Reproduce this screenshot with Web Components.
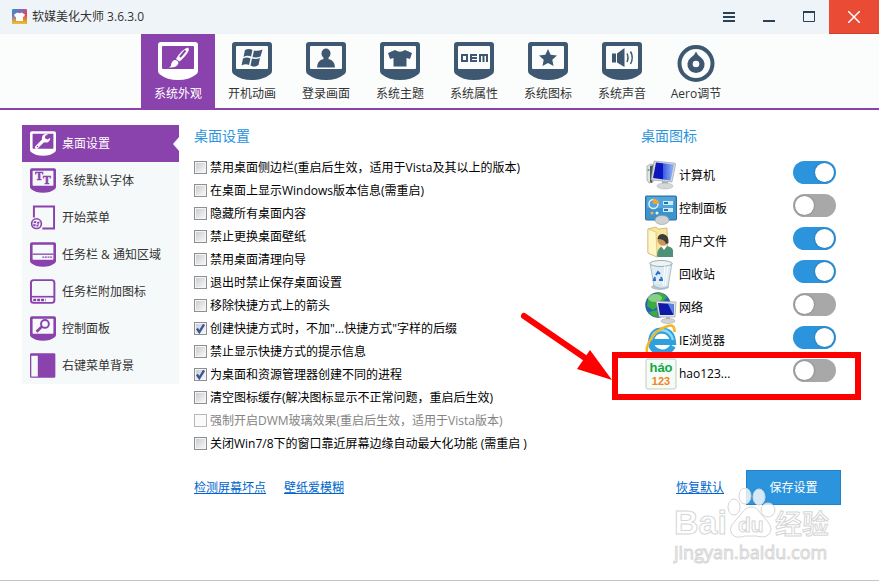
<!DOCTYPE html>
<html lang="zh-CN">
<head>
<meta charset="utf-8">
<meta name="viewport" content="width=device-width, initial-scale=1">
<title>软媒美化大师</title>
<style>
  html, body { height: 100%; }
  body {
    margin: 0;
    background: #fff;
    color: #333;
    font: 12px/18px "Open Sans", "Noto Sans CJK SC", sans-serif;
  }
</style>
</head>
<body>
<app-window></app-window>

<script>
const SHELL = 'M3 0H37Q40 0 40 3V29Q40 31 38 32.500Q31 38 20 38T2 32.500Q0 31 0 29V3Q0 0 3 0Z';

// monitor-shaped frame shared by the toolbar and sidebar icons
const monitor = (inner) => `
  <svg viewBox="0 0 40 38" fill="currentColor">
    <path d="${SHELL}"/>
    <rect x="4" y="4" width="32" height="23" rx="1" fill="var(--screen, #fbfdfd)"/>
    ${inner}
  </svg>`;

const ICONS = {
  brush: monitor(`<path d="M30 5.500Q25 7 20.500 13L18 17L21.500 19.500Q28 14 30.500 9Q31.500 6.500 30 5.500Z"/>
    <path d="M27.500 8.500L22 15" stroke="var(--screen)" stroke-width="2"/>
    <path d="M16.500 18Q20 18 20.500 21Q19 26 11 25.500Q13.500 24 13.500 21Q14.500 18.500 16.500 18Z"/>`),
  windows: monitor(`<path d="M13 8Q17 6 20.500 8L19 14.500Q15 13 11.500 15ZM22 8.500Q26 9.500 30.500 7.500L28.500 14.500Q24 16 20.500 15ZM11 16.500Q15 14.500 18.500 16.500L17 23Q13.500 21.500 9.500 23.500ZM20 16.500Q24 17.500 28 16L26.500 23Q22 26 18.500 23.500Z"/>`),
  user: monitor(`<ellipse cx="20" cy="11.500" rx="4.500" ry="5"/><path d="M17.500 15H22.500V17Q29 18.500 29 25.500H11Q11 18.500 17.500 17Z"/>`),
  shirt: monitor(`<path d="M15 8Q20 11.500 25 8L32 11L30 17L26.500 16V24.500H13.500V16L10 17L8 11Z"/>`),
  oem: monitor(`<g fill="none" stroke="currentColor" stroke-width="2"><path d="M8 13H13V19H8ZM23 13H17V19H23M17 16H23M26 20V13H33V20M29.500 13V20"/></g>`),
  star: monitor(`<path d="M20 7L22.600 12.800L29 13.400L24.300 17.800L25.500 24L20 21L14.500 24L15.700 17.800L11 13.400L17.400 12.800Z"/>`),
  sound: monitor(`<path d="M10 11.500H14V20.500H10ZM15 11.500L22.500 6V25L15 20.500Z"/>
    <path d="M25 11.500Q27 15.500 25 20M28.500 9.500Q32 15.500 28.500 22" fill="none" stroke="currentColor" stroke-width="1.500"/>`),
  aero: `<svg viewBox="0 0 40 38">
    <circle cx="20" cy="21.500" r="16.500" fill="none" stroke="currentColor" stroke-width="4"/>
    <path fill="currentColor" d="M20 9.500Q21.500 13.500 25 15.500A8.600 8.600 0 1 1 15 15.500Q18.500 13.500 20 9.500Z"/>
    <circle cx="20" cy="22" r="3.300" fill="#fbfdfd"/></svg>`,
  wrench: monitor(`<path d="M10 25L21 14" stroke="currentColor" stroke-width="5" stroke-linecap="round"/>
    <path d="M28 5Q20 3 18.500 9.500Q17.500 16 22.500 17.500Q30 18.500 31.500 10L27 13L23 11L23.500 7Z"/>
    <circle cx="11.500" cy="23.500" r="1.200" fill="var(--screen)"/>`),
  font: monitor(`<text font-family="Liberation Serif, serif" font-weight="bold" font-size="18" stroke="currentColor" stroke-width=".800"><tspan x="8" y="18">T</tspan><tspan x="20" y="24">T</tspan></text>`),
  start: `<svg viewBox="0 0 40 38"><path d="M6 19V2H37V36H19" fill="none" stroke="currentColor" stroke-width="3"/>
    <circle cx="10" cy="28.500" r="7.500" fill="none" stroke="currentColor" stroke-width="2.500"/>
    <path fill="currentColor" d="M6 25Q8 24 10 25L9 28Q7 27 5 28ZM11.500 25.500L15 25L14 28.500L10.500 28.500ZM5 29.500L9 29.500L8 33L5 32ZM10 30L14 29.500L12.500 33L9.500 33Z"/></svg>`,
  taskbar: monitor(`<path d="M4 18.500H36" stroke="currentColor" stroke-width="2"/><path d="M19 23H35" stroke="currentColor" stroke-width="2" stroke-dasharray="3 1"/>`),
  taskbarExtra: `<svg viewBox="0 0 40 38" fill="none" stroke="currentColor"><rect x="1.500" y="1.500" width="36" height="35" rx="4" stroke-width="3"/>
    <path d="M2 27H37" stroke-width="2.500"/><path d="M5 32H24" stroke-width="4" stroke-dasharray="4.500 1.500"/></svg>`,
  search: monitor(`<circle cx="23" cy="12" r="6" fill="none" stroke="currentColor" stroke-width="3"/><path d="M18.500 16L10 24" stroke="currentColor" stroke-width="4"/>`),
  menuBg: `<svg viewBox="0 0 40 38"><rect x="0" y="0" width="39" height="38" rx="2" fill="currentColor"/><rect x="2" y="4" width="10" height="32" fill="#f6f9f9"/></svg>`,

  appLogo: `<svg viewBox="0 0 16 16">
    <defs>
      <linearGradient id="a" x1="0" y1="0" x2="1" y2="1"><stop offset="0" stop-color="#2796d4"/><stop offset=".45" stop-color="#9861ad"/><stop offset=".6" stop-color="#e04458"/><stop offset="1" stop-color="#e64025"/></linearGradient>
      <linearGradient id="b" x1="0" y1="0" x2="0" y2="1"><stop offset=".4" stop-color="#e9d430" stop-opacity="0"/><stop offset="1" stop-color="#e9c62c"/></linearGradient>
    </defs>
    <rect width="15" height="15" rx="1" fill="url(#a)"/><rect width="15" height="15" rx="1" fill="url(#b)"/>
    <path fill="#fff" d="M5.500 3.500Q7.500 5 9.500 3.500L13 5.500L12 8L11 7.500V12H4V7.500L3 8L2 5.500Z"/></svg>`,

  computer: `<svg viewBox="0 0 32 32">
    <defs><linearGradient id="s" x1="0" y1="0" x2="1" y2="0"><stop offset="0" stop-color="#1018b0"/><stop offset=".45" stop-color="#0a14c8"/><stop offset=".5" stop-color="#3d5fe0"/><stop offset="1" stop-color="#9cb8f4"/></linearGradient></defs>
    <path fill="#dfe3e5" stroke="#92999d" stroke-width=".700" d="M2 6L6 4L10 5L8 22L4 23L2 20Z"/><path fill="#4f5659" d="M5 6L9 5L7 23L5 22Z"/>
    <circle cx="3.500" cy="10" r="1" fill="#37b93c"/>
    <path fill="#d5d9db" stroke="#92999d" stroke-width=".600" d="M9 1L29 3Q31 3 30.500 5L27 22L6 20Z"/>
    <path fill="url(#s)" d="M11 2.500L29 4.500L25.500 20.500L8 18Z"/>
    <path fill="#a9b0b4" d="M17 21L23 22L22 27H17Z"/><ellipse cx="20" cy="26" rx="8" ry="3" fill="#d4d8da" stroke="#a3aaad" stroke-width=".500"/></svg>`,
  panel: `<svg viewBox="0 0 32 32"><rect x=".500" y="3" width="31" height="24" rx="1" fill="#3e93cd" stroke="#286e9f"/>
    <path d="M2 4H30L28 15H2Z" fill="#62b1e0" opacity=".600"/><circle cx="8.500" cy="11" r="4.500" fill="none" stroke="#d9f0fb" stroke-width="1.500"/>
    <path d="M8 11V5.500Q13 6 14 11Z" fill="#f7a32c"/><circle cx="7" cy="20" r="1.500" fill="#ffac36"/><circle cx="12" cy="20" r="1.500" fill="#e7f5fb"/>
    <g fill="#c9edff"><rect x="18" y="8" width="10" height="4"/><rect x="18" y="15" width="10" height="4"/></g>
    <path d="M19 9H23V11H19ZM19 16H23V18H19Z" fill="#2874a8"/><ellipse cx="17" cy="27" rx="7" ry="4.500" fill="#cfd2d3" stroke="#96999b" stroke-width=".600"/></svg>`,
  files: `<svg viewBox="0 0 32 32"><path fill="#f7e69f" stroke="#c4a850" stroke-width=".700" d="M3 3L11 1L13 3L22 2L23 28L12 31L3 27Z"/>
    <path fill="#fff6c6" stroke="#d0b767" stroke-width=".600" d="M3 3L11 6L12 31L3 27Z"/>
    <path fill="#4f9078" d="M12 30Q12 21 19 20Q27 20 28 24L28 31H13Z"/><circle cx="18" cy="14" r="5.500" fill="#cb9460"/>
    <path fill="#3c3d39" d="M12.500 13Q13 8 18 8Q24 9 23.500 17L21 18Q20 13 12.500 13Z"/><path fill="#fff" d="M16 20L19 24L22 20Z"/></svg>`,
  bin: `<svg viewBox="0 0 32 32"><ellipse cx="15" cy="28" rx="9" ry="3" fill="#bac5cb"/>
    <path fill="#dae9f1" fill-opacity=".850" stroke="#92a7b2" stroke-width=".700" d="M5 4L27 4L23 28Q15 31 9 27Z"/>
    <ellipse cx="16" cy="4.500" rx="11" ry="3" fill="#eef3f5" stroke="#889aa4" stroke-width=".800"/>
    <path fill="none" stroke="#2673c9" stroke-width="2" d="M11 16L13 13L15 15M16 18L17 21H14M11 21L9 21L10 18"/>
    <path d="M20 7L18 27M23 7L20 27" stroke="#fff" stroke-width="1"/></svg>`,
  network: `<svg viewBox="0 0 32 32"><circle cx="13" cy="13" r="12.500" fill="#1e68ba" stroke="#234770" stroke-width=".500"/>
    <path fill="#3dab3f" d="M3 7Q8 0 17 1L22 5L17 10L11 9L12 15L8 18L2 14ZM4 20L12 18L13 25Q7 25 4 20Z"/>
    <ellipse cx="10" cy="6" rx="7" ry="4" fill="#c3f1ba" opacity=".550"/>
    <path fill="#e2e5e7" stroke="#8f9799" stroke-width=".600" d="M11 9L31 10L30 25L14 25Z"/><path fill="#101aa8" d="M13 11L29 12L28.500 23L15 23Z"/>
    <path fill="#5a85e5" d="M23 12L29 12L28.500 23Z"/><path fill="#b0b5b8" d="M21 25H25V29H21Z"/><ellipse cx="23" cy="29" rx="7" ry="2.500" fill="#cfd4d6" stroke="#989fa1" stroke-width=".500"/></svg>`,
  ie: `<svg viewBox="0 0 32 32"><path fill="none" stroke="#2fa0de" stroke-width="6" d="M28 21Q24 28 16.500 27.500Q6 26 6 16.500Q7 5.500 17 5.500Q27 6 28 17H9"/>
    <path fill="none" stroke="#8fdaf6" stroke-width="2.500" d="M6 15Q8 5.500 17 5Q26 6 28 15"/>
    <path fill="none" stroke="#f3b726" stroke-width="2.500" d="M5 30Q-1 28 4 17Q11 4 23 1Q30-1 29.500 7"/></svg>`,
  hao: `<svg viewBox="0 0 32 32"><rect x="1" y="1" width="30" height="30" rx="2" fill="#f5fbf6" stroke="#bfcdc4"/>
    <g font-family="Liberation Sans, sans-serif" font-weight="bold" text-anchor="middle"><text x="16" y="14" font-size="13" fill="#10a942">háo</text><text x="16" y="27" font-size="11" fill="#f28522">123</text></g></svg>`
};

function define(name, css, html, setup) {
  customElements.define(name, class extends HTMLElement {
    connectedCallback() {
      if (this.shadowRoot) return;
      this.attachShadow({ mode: 'open' });
      this.shadowRoot.innerHTML = `<style>* { box-sizing: border-box; } ${css}</style>${html}`;
      if (setup) setup(this, this.shadowRoot);
    }
  });
}

define('app-icon', `
  :host { display: block; flex: none; }
  svg { display: block; width: 100%; height: 100%; overflow: visible; }
`, '', (el, root) => {
  root.innerHTML += ICONS[el.getAttribute('name')];
});

define('title-bar', `
  :host { display: flex; align-items: center; height: 34px; background: #eff4f9; }
  app-icon { width: 16px; height: 16px; margin: 0 4px 0 12px; }
  h1 { flex: 1; margin: 0; font: inherit; }
  button { width: 40px; height: 34px; padding: 0; border: 0; background: none; color: #2b4158; display: grid; place-items: center; }
  .close { width: 50px; background: #e94b35; color: #fff; border-bottom: 1px solid #cf422f; }
  svg { display: block; fill: none; stroke: currentColor; }
`, `
  <app-icon name="appLogo"></app-icon>
  <h1><slot></slot></h1>
  <button aria-label="菜单"><svg width="12" height="12" stroke-width="2"><path d="M0 2H12M0 6H12M0 10H12"/></svg></button>
  <button aria-label="最小化"><svg width="12" height="12" stroke-width="2"><path d="M0 10H12"/></svg></button>
  <button aria-label="最大化"><svg width="12" height="12"><path d="M.500 1H11.500V10.500H.500Z"/><path d="M0 1H12" stroke-width="2"/></svg></button>
  <button class="close" aria-label="关闭"><svg width="12" height="12" stroke-width="1.500"><path d="M0 0L12 12M12 0L0 12"/></svg></button>
`);

define('nav-tab', `
  :host { display: block; width: 74px; }
  button { width: 100%; height: 74px; padding: 8px 0 5px; border: 0; background: none; color: #333; font: inherit; display: flex; flex-direction: column; align-items: center; justify-content: space-between; }
  app-icon { width: 40px; height: 38px; color: #3f5871; }
  :host([active]) button { background: #8a42ad; color: #fff; }
  :host([active]) app-icon { color: #fff; --screen: #8a42ad; }
`, `<button><app-icon></app-icon><span><slot></slot></span></button>`, (el, root) => {
  root.querySelector('app-icon').replaceWith(makeIcon(el));
});

define('side-item', `
  :host { display: block; --screen: #f6f9f9; }
  button { width: 100%; height: 37px; padding: 0 0 0 8px; border: 0; background: none; color: #333; font: inherit; text-align: left; display: flex; align-items: center; gap: 6px; }
  app-icon { width: 26px; height: 25px; color: #8a42ad; }
  span { flex: 1; white-space: nowrap; }
  :host([active]) { --screen: #8a42ad; }
  :host([active]) button { background: #8a42ad; color: #fff; }
  :host([active]) app-icon { color: #fff; }
  :host([active]) button::after { content: ""; border: 7px solid transparent; border-left: 0; border-right: 6px solid #fff; }
`, `<button><app-icon></app-icon><span><slot></slot></span></button>`, (el, root) => {
  root.querySelector('app-icon').replaceWith(makeIcon(el));
});

function makeIcon(el) {
  const icon = document.createElement('app-icon');
  icon.setAttribute('name', el.getAttribute('icon'));
  return icon;
}

define('check-row', `
  :host { display: block; color: #000; }
  label { display: flex; align-items: center; gap: 3px; height: 23px; white-space: nowrap; }
  input { appearance: none; flex: none; width: 13px; height: 13px; margin: 0; border: 1px solid #8e8f8f; background: linear-gradient(135deg, #c9cdd3, #f7f7f7) content-box, #f4f4f4; padding: 1px; }
  input:checked { background: url("data:image/svg+xml,%3Csvg xmlns='http://www.w3.org/2000/svg' viewBox='0 0 11 11'%3E%3Cpath d='M2.500 5.500L4.500 8.500L8.500 2' fill='none' stroke='%233c5499' stroke-width='2'/%3E%3C/svg%3E") border-box, linear-gradient(135deg, #c9cdd3, #f7f7f7) content-box, #f4f4f4; }
  :host([disabled]) { color: #838383; }
  input:disabled { border-color: #b8b8b8; background: #fafafa; }
`, `<label><input type="checkbox"><span><slot></slot></span></label>`, (el, root) => {
  const input = root.querySelector('input');
  input.checked = el.hasAttribute('checked');
  input.disabled = el.hasAttribute('disabled');
});

define('toggle-row', `
  :host { display: block; position: relative; color: #000; }
  label { display: flex; align-items: center; gap: 2px; height: 33px; padding: 0 5px 0 4px; }
  app-icon { width: 32px; height: 32px; }
  span { flex: 1; }
  input { appearance: none; width: 43px; height: 23px; margin: 0 0 6px; padding: 2px; border-radius: 12px; background: #a8a8a8; display: flex; }
  input::before { content: ""; width: 19px; height: 19px; border-radius: 50%; background: #fff; box-shadow: 0 0 2px #0006; }
  input:checked { background: #2c94dd; justify-content: flex-end; }
`, `<label><app-icon></app-icon><span><slot></slot></span><input type="checkbox" role="switch"></label><slot name="mark"></slot>`, (el, root) => {
  root.querySelector('app-icon').replaceWith(makeIcon(el));
  root.querySelector('input').checked = el.hasAttribute('checked');
});

// red frame with an arrow, laid over the row it is put in
define('red-callout', `
  :host { position: absolute; inset: -5px -20px -10px -29px; border: 6px solid #f00; pointer-events: none; }
  svg { position: absolute; right: 100%; top: -48px; margin-right: 6px; }
`, `<svg width="92" height="72" fill="#f00"><path d="M4 6L68 50" stroke="#f00" stroke-width="6" stroke-linecap="round"/><path d="M92 70L70 40L57 59Z"/></svg>`);

define('water-mark', `
  :host { display: block; pointer-events: none; }
  svg { display: block; fill: #fff; fill-opacity: .8; stroke: #d6d6d6; stroke-width: 1; }
`, `
  <svg width="164" height="76" font-family="'Liberation Sans', 'Noto Sans CJK SC', sans-serif" font-weight="bold">
    <text x="1" y="46" font-size="34">Bai</text>
    <g><ellipse cx="61" cy="19" rx="6" ry="8"/><ellipse cx="72" cy="8" rx="6" ry="8"/><ellipse cx="86" cy="9" rx="6" ry="8"/><ellipse cx="95" cy="22" rx="7" ry="7"/>
    <path d="M78 19Q84 19 88 26L95 34Q101 42 95 47Q92 50 83 48H72Q62 51 59 46Q55 40 62 33L68 26Q73 19 78 19Z"/></g>
    <text x="65" y="44" font-size="21">du</text>
    <text x="102" y="46" font-size="27" font-weight="500">经验</text>
    <text x="1" y="71" font-size="18" font-family="Open Sans, sans-serif" font-weight="500">jingyan.baidu.com</text>
  </svg>`);

define('app-window', `
  :host { display: flex; flex-direction: column; min-height: 100vh; box-sizing: border-box; position: relative; border-bottom: 1px solid #c4c4c4; }
  nav { display: flex; padding-left: 141px; background: #fbfdfd; border-bottom: 2px solid #8a42ad; }
  main { flex: 1; display: flex; padding: 15px 38px 0 22px; }
  aside { width: 157px; align-self: flex-start; background: #f6f9f9; }
  .options { flex: 1; padding-left: 15px; }
  .desktop { width: 200px; }
  h2 { margin: 0; font-size: 14px; font-weight: normal; line-height: 22px; color: #2c94dd; }
  .checks { padding: 9px 0 24px; }
  .toggles { padding: 12px 0 80px; }
  a { color: #0066cc; text-decoration: underline; }
  .links { display: flex; align-items: center; gap: 18px; }
  .actions { display: flex; align-items: center; justify-content: space-between; padding-left: 35px; }
  .save { width: 95px; height: 35px; border: 1px solid #2582c4; background: #2c94dd; color: #fff; font: inherit; }
  water-mark { position: absolute; right: 42px; bottom: 16px; }
`, `
  <title-bar>软媒美化大师 3.6.3.0</title-bar>
  <nav>
    <nav-tab icon="brush" active>系统外观</nav-tab>
    <nav-tab icon="windows">开机动画</nav-tab>
    <nav-tab icon="user">登录画面</nav-tab>
    <nav-tab icon="shirt">系统主题</nav-tab>
    <nav-tab icon="oem">系统属性</nav-tab>
    <nav-tab icon="star">系统图标</nav-tab>
    <nav-tab icon="sound">系统声音</nav-tab>
    <nav-tab icon="aero">Aero调节</nav-tab>
  </nav>
  <main>
    <aside>
      <side-item icon="wrench" active>桌面设置</side-item>
      <side-item icon="font">系统默认字体</side-item>
      <side-item icon="start">开始菜单</side-item>
      <side-item icon="taskbar">任务栏 &amp; 通知区域</side-item>
      <side-item icon="taskbarExtra">任务栏附加图标</side-item>
      <side-item icon="search">控制面板</side-item>
      <side-item icon="menuBg">右键菜单背景</side-item>
    </aside>
    <section class="options">
      <h2>桌面设置</h2>
      <div class="checks">
        <check-row>禁用桌面侧边栏(重启后生效，适用于Vista及其以上的版本)</check-row>
        <check-row>在桌面上显示Windows版本信息(需重启)</check-row>
        <check-row>隐藏所有桌面内容</check-row>
        <check-row>禁止更换桌面壁纸</check-row>
        <check-row>禁用桌面清理向导</check-row>
        <check-row>退出时禁止保存桌面设置</check-row>
        <check-row>移除快捷方式上的箭头</check-row>
        <check-row checked>创建快捷方式时，不加"...快捷方式"字样的后缀</check-row>
        <check-row>禁止显示快捷方式的提示信息</check-row>
        <check-row checked>为桌面和资源管理器创建不同的进程</check-row>
        <check-row>清空图标缓存(解决图标显示不正常问题，重启后生效)</check-row>
        <check-row disabled>强制开启DWM玻璃效果(重启后生效，适用于Vista版本)</check-row>
        <check-row>关闭Win7/8下的窗口靠近屏幕边缘自动最大化功能 (需重启 )</check-row>
      </div>
      <div class="links"><a href="#">检测屏幕坏点</a><a href="#">壁纸爱模糊</a></div>
    </section>
    <section class="desktop">
      <h2>桌面图标</h2>
      <div class="toggles">
        <toggle-row icon="computer" checked>计算机</toggle-row>
        <toggle-row icon="panel">控制面板</toggle-row>
        <toggle-row icon="files" checked>用户文件</toggle-row>
        <toggle-row icon="bin" checked>回收站</toggle-row>
        <toggle-row icon="network">网络</toggle-row>
        <toggle-row icon="ie" checked>IE浏览器</toggle-row>
        <toggle-row icon="hao">hao123...<red-callout slot="mark"></red-callout></toggle-row>
      </div>
      <div class="actions"><a href="#">恢复默认</a><button class="save">保存设置</button></div>
    </section>
  </main>
  <water-mark></water-mark>
`);
</script>
</body>
</html>
